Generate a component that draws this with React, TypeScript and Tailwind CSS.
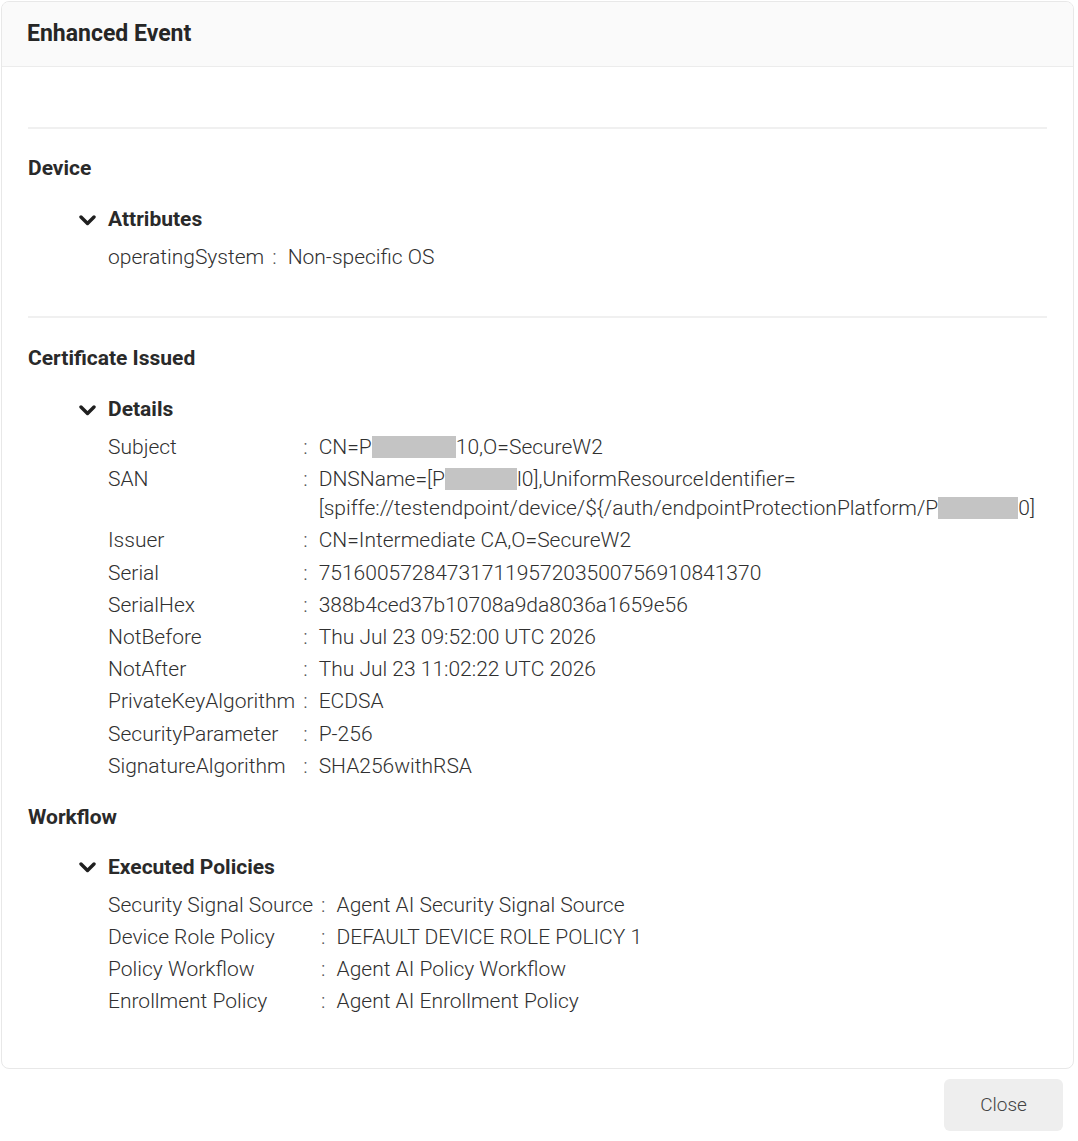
import React from "react";

type Row = { label: string; value: React.ReactNode };

const Redact = ({ w }: { w: number }) => (
  <span
    className="inline-block h-[22px] align-[-4px] bg-[#c4c4c4]"
    style={{ width: w }}
  />
);

const Chevron = () => (
  <svg width="17" height="11" viewBox="0 0 17 11" className="shrink-0">
    <path
      d="M2 2 L8.5 8.5 L15 2"
      fill="none"
      stroke="#1f1f1f"
      strokeWidth="3.4"
      strokeLinecap="round"
      strokeLinejoin="round"
    />
  </svg>
);

function Group({ title, rows }: { title: string; rows: Row[] }) {
  return (
    <div className="ml-[51px]">
      <div className="flex items-center gap-[12px] h-[28px]">
        <Chevron />
        <span className="text-[21px] font-bold text-[#2a2a2a]">{title}</span>
      </div>
      <div className="mt-[9px] ml-[29px] grid grid-cols-[auto_auto_1fr] gap-y-[3.2px] text-[21px] leading-[29px] font-light text-[#303030]">
        {rows.map((r) => (
          <React.Fragment key={r.label}>
            <div className="whitespace-nowrap">{r.label}</div>
            <div className="pl-[8px] pr-[11px] text-[#555555]">:</div>
            <div className="break-all">{r.value}</div>
          </React.Fragment>
        ))}
      </div>
    </div>
  );
}

function Heading({ children }: { children: React.ReactNode }) {
  return (
    <div className="h-[28px] leading-[28px] text-[21px] font-bold text-[#2a2a2a]">
      {children}
    </div>
  );
}

const Divider = () => <div className="h-[2px] bg-[#f0f0f0]" />;

export default function App() {
  const details: Row[] = [
    {
      label: "Subject",
      value: (
        <>
          CN=P<Redact w={84} />
          10,O=SecureW2
        </>
      ),
    },
    {
      label: "SAN",
      value: (
        <>
          DNSName=[P<Redact w={72} />
          l0],UniformResourceIdentifier=
          <br />
          [spiffe://testendpoint/device/${"{"}/auth/endpointProtectionPlatform/P
          <Redact w={80} />
          0]
        </>
      ),
    },
    { label: "Issuer", value: "CN=Intermediate CA,O=SecureW2" },
    { label: "Serial", value: "75160057284731711957203500756910841370" },
    { label: "SerialHex", value: "388b4ced37b10708a9da8036a1659e56" },
    { label: "NotBefore", value: "Thu Jul 23 09:52:00 UTC 2026" },
    { label: "NotAfter", value: "Thu Jul 23 11:02:22 UTC 2026" },
    { label: "PrivateKeyAlgorithm", value: "ECDSA" },
    { label: "SecurityParameter", value: "P-256" },
    { label: "SignatureAlgorithm", value: "SHA256withRSA" },
  ];

  const policies: Row[] = [
    { label: "Security Signal Source", value: "Agent AI Security Signal Source" },
    { label: "Device Role Policy", value: "DEFAULT DEVICE ROLE POLICY 1" },
    { label: "Policy Workflow", value: "Agent AI Policy Workflow" },
    { label: "Enrollment Policy", value: "Agent AI Enrollment Policy" },
  ];

  return (
    <div
      className="w-[1078px] h-[1141px] bg-white pt-[1px] pl-[1px]"
      style={{ fontFamily: "Roboto, 'Noto Sans', sans-serif" }}
    >
      <div className="w-[1073px] h-[1068px] border border-[#e8e8e8] rounded-[8px] overflow-hidden flex flex-col">
        <div className="h-[65px] shrink-0 bg-[#fafafa] border-b border-[#ececec] flex items-center px-[25px]">
          <span className="text-[23px] font-bold text-[#262626]">Enhanced Event</span>
        </div>
        <div className="px-[26px] pt-[60px]">
          <Divider />
          <div className="mt-[25px]">
            <Heading>Device</Heading>
            <div className="mt-[24px]">
              <Group
                title="Attributes"
                rows={[{ label: "operatingSystem", value: "Non-specific OS" }]}
              />
            </div>
          </div>
          <div className="mt-[44px]">
            <Divider />
          </div>
          <div className="mt-[26px]">
            <Heading>Certificate Issued</Heading>
            <div className="mt-[24px]">
              <Group title="Details" rows={details} />
            </div>
          </div>
          <div className="mt-[22px]">
            <Heading>Workflow</Heading>
            <div className="mt-[23px]">
              <Group title="Executed Policies" rows={policies} />
            </div>
          </div>
        </div>
      </div>
      <div className="flex justify-end pr-[15px] mt-[10px]">
        <button className="w-[119px] h-[52px] rounded-[6px] bg-[#eeeeee] text-[19px] font-light text-[#444444]">
          Close
        </button>
      </div>
    </div>
  );
}
